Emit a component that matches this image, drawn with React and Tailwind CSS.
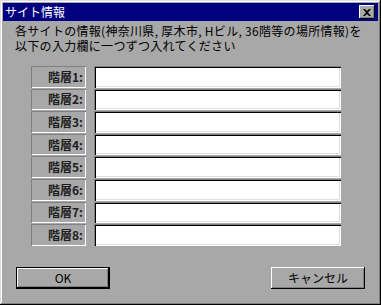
const raised = 'shadow-[inset_-1px_-1px_#000,inset_1px_1px_#fff,inset_-2px_-2px_#808080]';

function Button({ label, isDefault }) {
  return (
    <button
      className={
        'w-[94px] h-[22px] bg-[#a8a8a8] text-[12px] text-black flex items-center justify-center ' +
        (isDefault
          ? 'border border-black shadow-[inset_-1px_-1px_#000,inset_1px_1px_#fff,inset_-2px_-2px_#808080]'
          : raised)
      }
    >
      {label}
    </button>
  );
}

export default function App() {
  const rows = [1, 2, 3, 4, 5, 6, 7, 8];
  return (
    <div className="w-[381px] h-[305px] bg-[#a8a8a8] p-[3px] flex flex-col font-['Noto_Sans_CJK_JP',sans-serif] shadow-[inset_-1px_-1px_#000,inset_1px_1px_#dfdfdf,inset_-2px_-2px_#808080,inset_2px_2px_#fff]">
      <div className="h-[18px] bg-[#000080] flex items-center justify-between pl-[2px] pr-[3px]">
        <span className="text-white text-[12px] leading-none">サイト情報</span>
        <div className="w-[16px] h-[14px] bg-[#a8a8a8] flex items-center justify-center shadow-[inset_-1px_-1px_#000,inset_1px_1px_#fff,inset_-2px_-2px_#808080]">
          <svg width="8" height="7" viewBox="0 0 8 7">
            <path d="M0 0h2l2 2 2-2h2L5 3.5 8 7H6L4 5 2 7H0l3-3.5z" fill="#000" />
          </svg>
        </div>
      </div>

      <div className="pl-[12px] pt-[2px] text-[12px] leading-[15px] tracking-[0.3px] text-black">
        <p>各サイトの情報(神奈川県, 厚木市, Hビル, 36階等の場所情報)を</p>
        <p>以下の入力欄に一つずつ入れてください</p>
      </div>

      <div className="mt-[13px] ml-[28px] flex flex-col gap-[1px]">
        {rows.map(n => (
          <div key={n} className="flex items-stretch gap-[8px] h-[21.6px]">
            <div className="w-[55px] flex items-center justify-end pr-[3px] text-[12px] font-bold text-[#202020] shadow-[inset_1px_1px_#808080,inset_-1px_-1px_#fff]">
              階層{n}:
            </div>
            <div className="w-[247px] bg-white shadow-[inset_1px_1px_#808080,inset_2px_2px_#000,inset_-1px_-1px_#fff,inset_-2px_-2px_#dfdfdf]" />
          </div>
        ))}
      </div>

      <div className="mt-auto mb-[13px] px-[13px] flex justify-between">
        <Button label="OK" isDefault />
        <Button label="キャンセル" />
      </div>
    </div>
  );
}
